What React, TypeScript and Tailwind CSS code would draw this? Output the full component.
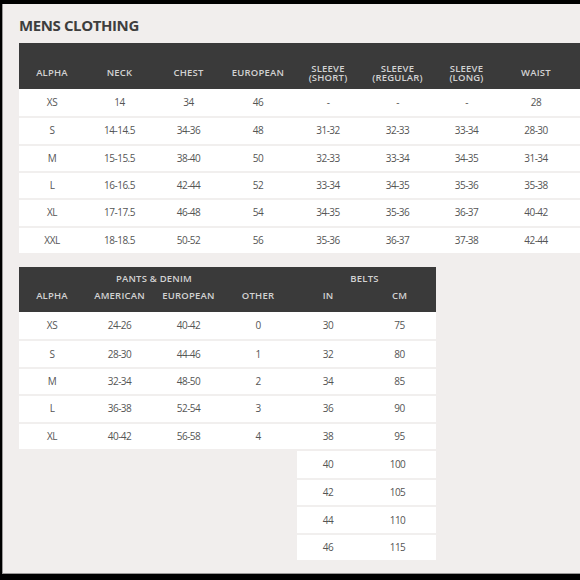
import React from 'react';

// size chart data
const topHead = [
  ['ALPHA'],
  ['NECK'],
  ['CHEST'],
  ['EUROPEAN'],
  ['SLEEVE', '(SHORT)'],
  ['SLEEVE', '(REGULAR)'],
  ['SLEEVE', '(LONG)'],
  ['WAIST'],
];
const topRows = [
  ['XS', '14', '34', '46', '-', '-', '-', '28'],
  ['S', '14-14.5', '34-36', '48', '31-32', '32-33', '33-34', '28-30'],
  ['M', '15-15.5', '38-40', '50', '32-33', '33-34', '34-35', '31-34'],
  ['L', '16-16.5', '42-44', '52', '33-34', '34-35', '35-36', '35-38'],
  ['XL', '17-17.5', '46-48', '54', '34-35', '35-36', '36-37', '40-42'],
  ['XXL', '18-18.5', '50-52', '56', '35-36', '36-37', '37-38', '42-44'],
];

const pantsRows = [
  ['XS', '24-26', '40-42', '0', '30', '75'],
  ['S', '28-30', '44-46', '1', '32', '80'],
  ['M', '32-34', '48-50', '2', '34', '85'],
  ['L', '36-38', '52-54', '3', '36', '90'],
  ['XL', '40-42', '56-58', '4', '38', '95'],
];
const beltExtra = [
  ['40', '100'],
  ['42', '105'],
  ['44', '110'],
  ['46', '115'],
];

const font = { fontFamily: '"Open Sans", "Liberation Sans", sans-serif' };

export default function App() {
  return (
    <div className="w-[580px] h-[580px] bg-black pt-[4px] pl-[2px] pb-[6px] overflow-hidden" style={font}>
      <div className="h-full bg-[#f1eeed] border-l border-b border-[#9a9898] pl-[16px] overflow-hidden">
        <h1 className="mt-[14px] mb-[10px] text-[15px] leading-[15px] font-bold text-[#3e3e3e] tracking-[-0.4px]">
          MENS CLOTHING
        </h1>

        {/* main table */}
        <div className="w-[600px]">
          <div className="grid h-[46px] bg-[#3a3a3a] pt-[14px] grid-cols-[66px_69px_69px_70px_70px_69px_69px_70px_1fr]">
            {topHead.map((h, i) => (
              <div key={i} className="flex flex-col items-center justify-center text-[9.5px] leading-[9.5px] font-semibold text-[#d2d2d2] tracking-[0.2px]">
                {h.map((l) => (
                  <span key={l}>{l}</span>
                ))}
              </div>
            ))}
            <div />
          </div>
          {topRows.map((r, ri) => (
            <div
              key={ri}
              className={`grid h-[27.33px] bg-white grid-cols-[66px_69px_69px_70px_70px_69px_69px_70px_1fr] ${ri > 0 ? 'border-t-2 border-[#f1efee]' : ''}`}
            >
              {r.map((c, ci) => (
                <div key={ci} className="flex items-center justify-center text-[10px] text-[#555] tracking-[-0.5px]">
                  {c}
                </div>
              ))}
              <div />
            </div>
          ))}
        </div>

        {/* pants & belts */}
        <div className="mt-[14px] w-[417px]">
          <div className="h-[45px] bg-[#3a3a3a] pt-[6px] text-[9.5px] leading-[12px] font-semibold text-[#d2d2d2] tracking-[0.2px]">
            <div className="grid grid-cols-[66px_138px_70px_143px] h-[12px]">
              <div />
              <div className="text-center">PANTS &amp; DENIM</div>
              <div />
              <div className="text-center">BELTS</div>
            </div>
            <div className="grid grid-cols-[66px_69px_69px_70px_70px_73px] h-[12px] mt-[5px]">
              {['ALPHA', 'AMERICAN', 'EUROPEAN', 'OTHER', 'IN', 'CM'].map((h) => (
                <div key={h} className="text-center">{h}</div>
              ))}
            </div>
          </div>
          {pantsRows.map((r, ri) => (
            <div
              key={ri}
              className={`grid h-[27.4px] bg-white grid-cols-[66px_69px_69px_70px_70px_73px] ${ri > 0 ? 'border-t-2 border-[#f1efee]' : ''}`}
            >
              {r.map((c, ci) => (
                <div key={ci} className="flex items-center justify-center text-[10px] text-[#555] tracking-[-0.5px]">
                  {c}
                </div>
              ))}
            </div>
          ))}
          <div className="ml-[278px] w-[139px] mt-[2px]">
            {beltExtra.map((r, ri) => (
              <div
                key={ri}
                className={`grid h-[27.25px] bg-white grid-cols-[62px_77px] ${ri > 0 ? 'border-t-2 border-[#f1efee]' : ''}`}
              >
                {r.map((c, ci) => (
                  <div key={ci} className="flex items-center justify-center text-[10px] text-[#555] tracking-[-0.5px]">
                    {c}
                  </div>
                ))}
              </div>
            ))}
          </div>
        </div>
      </div>
    </div>
  );
}
